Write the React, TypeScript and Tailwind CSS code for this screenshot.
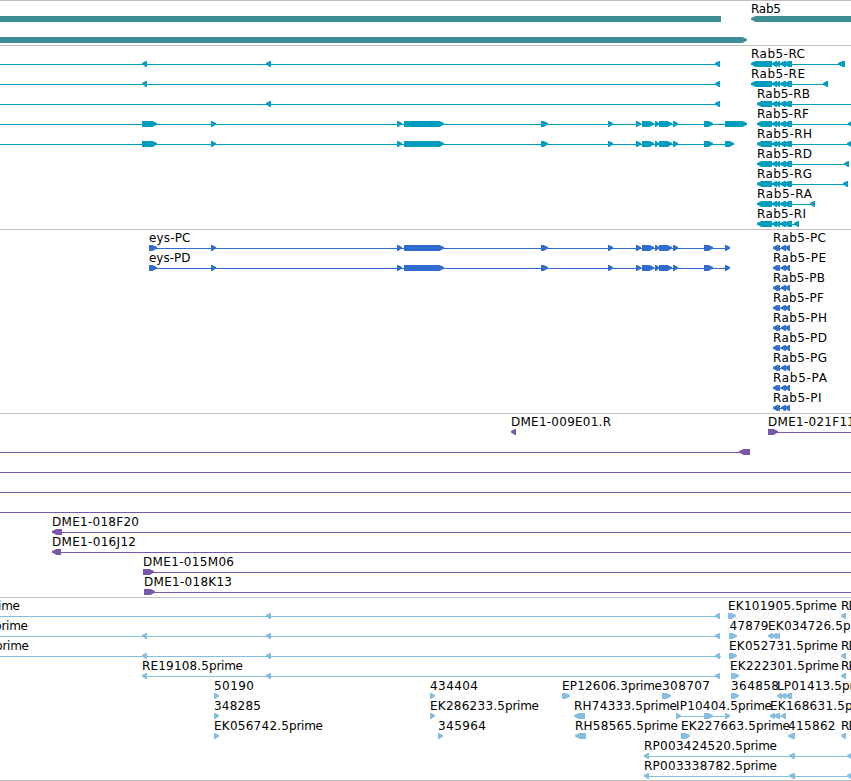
type Direction = "left" | "right"

// start, end, direction of the arrow head
type Exon = [number, number, Direction]

// text, start, drawn width
type Label = [string, number, number]

interface Row {
  lines?: [number, number][]
  exons?: Exon[]
  labels?: Label[]
}

interface TrackProps {
  rows: Row[]
  color: string
  rowClassName?: string
  className?: string
}

const WIDTH = 851
const HEAD = 4.5
const SUFFIX = "prime"
const SUFFIX_WIDTH = 34

const l = (start: number, end: number): Exon => [start, end, "left"]
const r = (start: number, end: number): Exon => [start, end, "right"]

const geneRows: Row[] = [
  {
    exons: [r(-20, 721), l(751, 870)],
    labels: [["Rab5", 751, 30]],
  },
  { exons: [r(-20, 747)] },
]

const eysExons: Exon[] = [
  r(211, 216),
  r(397, 402),
  r(404, 444),
  r(541, 548),
  r(608, 613),
  r(636, 641),
  r(642, 654),
  r(655, 659),
  r(659, 672),
  r(673, 678),
  r(704, 713),
]

const rab5Exons: Exon[] = [l(772, 777), l(776, 780), l(780, 786), l(784, 792)]

const rab5Transcript = (name: string, start: number, width: number, last: Exon): Row => ({
  lines: [[start, last[1]]],
  exons: [l(start, 772), ...rab5Exons, last],
  labels: [[name, start, width]],
})

const withRow = (a: Row, b: Row): Row => ({
  lines: [...(a.lines ?? []), ...(b.lines ?? [])],
  exons: [...(a.exons ?? []), ...(b.exons ?? [])],
  labels: [...(a.labels ?? []), ...(b.labels ?? [])],
})

const transcriptRows: Row[] = [
  withRow(
    { lines: [[0, 720]], exons: [l(142, 147), l(266, 271), l(715, 720)] },
    rab5Transcript("Rab5-RC", 751, 54, l(838, 845)),
  ),
  withRow(
    { lines: [[0, 720]], exons: [l(142, 147), l(715, 720)] },
    rab5Transcript("Rab5-RE", 751, 54, l(823, 828)),
  ),
  withRow(
    { lines: [[0, 720]], exons: [l(266, 271), l(715, 720)] },
    rab5Transcript("Rab5-RB", 757, 53, l(856, 862)),
  ),
  withRow(
    { lines: [[0, 747]], exons: [r(142, 157), ...eysExons, r(725, 747)] },
    rab5Transcript("Rab5-RF", 757, 52, l(848, 853)),
  ),
  withRow(
    { lines: [[0, 734]], exons: [r(142, 157), ...eysExons, r(725, 734)] },
    rab5Transcript("Rab5-RH", 757, 55, l(847, 852)),
  ),
  rab5Transcript("Rab5-RD", 757, 55, l(844, 849)),
  rab5Transcript("Rab5-RG", 757, 55, l(843, 848)),
  rab5Transcript("Rab5-RA", 757, 55, l(810, 815)),
  rab5Transcript("Rab5-RI", 757, 49, l(794, 799)),
]

const eysProtein = (name: string): Row => ({
  lines: [[149, 730]],
  exons: [r(149, 157), ...eysExons, r(725, 730)],
  labels: [[name, 149, 41.5]],
})

const rab5Protein = (name: string, width: number): Row => ({
  lines: [[773, 789]],
  exons: [l(773, 778), l(776, 780), l(781, 786), l(785, 790)],
  labels: [[name, 773, width]],
})

const proteinRows: Row[] = [
  withRow(eysProtein("eys-PC"), rab5Protein("Rab5-PC", 53)),
  withRow(eysProtein("eys-PD"), rab5Protein("Rab5-PE", 53)),
  rab5Protein("Rab5-PB", 52),
  rab5Protein("Rab5-PF", 51),
  rab5Protein("Rab5-PH", 54),
  rab5Protein("Rab5-PD", 54),
  rab5Protein("Rab5-PG", 54),
  rab5Protein("Rab5-PA", 54),
  rab5Protein("Rab5-PI", 48.5),
]

const bacRows: Row[] = [
  {
    lines: [[768, WIDTH]],
    exons: [l(511, 516), r(768, 778)],
    labels: [
      ["DME1-009E01.R", 511, 100],
      ["DME1-021F11", 768, 87],
    ],
  },
  { lines: [[0, 750]], exons: [l(739, 750)] },
  { lines: [[0, WIDTH]] },
  { lines: [[0, WIDTH]] },
  { lines: [[0, WIDTH]] },
  { lines: [[52, WIDTH]], exons: [l(52, 62)], labels: [["DME1-018F20", 52, 87]] },
  { lines: [[52, WIDTH]], exons: [l(52, 61)], labels: [["DME1-016J12", 52, 84]] },
  { lines: [[143, WIDTH]], exons: [r(143, 154)], labels: [["DME1-015M06", 143, 91]] },
  { lines: [[144, WIDTH]], exons: [r(144, 155)], labels: [["DME1-018K13", 144, 88]] },
]

const cdnaRows: Row[] = [
  {
    lines: [[0, 720]],
    exons: [l(266, 271), l(715, 720), r(728, 736), l(841, 846)],
    labels: [
      ["prime", -14, 34],
      ["EK101905.5prime", 728, 109],
      ["RE", 841, 15],
    ],
  },
  {
    lines: [[0, 720]],
    exons: [l(142, 147), l(266, 271), l(715, 720), r(729, 737), l(768, 773), l(772, 777), l(775, 780)],
    labels: [
      ["prime", -6, 34],
      ["47879", 729.5, 39],
      ["EK034726.5prime", 768, 109],
    ],
  },
  {
    lines: [[0, 721]],
    exons: [l(142, 147), l(266, 271), l(715, 720), r(729, 737), l(841, 846)],
    labels: [
      ["prime", -5, 34],
      ["EK052731.5prime", 729, 109],
      ["RE", 841, 15],
    ],
  },
  {
    lines: [[142, 720]],
    exons: [l(142, 147), l(266, 271), l(715, 720), r(731, 739), l(841, 846)],
    labels: [
      ["RE19108.5prime", 142, 101],
      ["EK222301.5prime", 730, 109],
      ["RE", 841, 15],
    ],
  },
  {
    exons: [r(214, 219), r(430, 435), r(562, 570), r(662, 671), r(731, 739), l(777, 782), l(781, 786), l(785, 792)],
    labels: [
      ["50190", 214, 40],
      ["434404", 430, 48],
      ["EP12606.3prime", 562, 100],
      ["308707", 662, 48],
      ["364858", 731, 48],
      ["LP01413.5prime", 777, 99],
    ],
  },
  {
    lines: [
      [676, 730],
      [770, 785],
    ],
    exons: [
      r(214, 219),
      r(430, 435),
      l(574, 585),
      r(676, 681),
      r(704, 713),
      r(725, 730),
      l(770, 775),
      l(774, 780),
      l(781, 786),
    ],
    labels: [
      ["348285", 214, 47],
      ["EK286233.5prime", 430, 109],
      ["RH74333.5prime", 574, 103],
      ["IP10404.5prime", 676, 96],
      ["EK168631.5prime", 770, 109],
    ],
  },
  {
    exons: [r(214, 219), r(438, 443), l(575, 586), r(681, 690), l(788, 795), l(841, 846)],
    labels: [
      ["EK056742.5prime", 214, 109],
      ["345964", 438, 48],
      ["RH58565.5prime", 575, 103],
      ["EK227663.5prime", 681, 109],
      ["415862", 788, 47.5],
      ["RE", 841, 15],
    ],
  },
  {
    lines: [[644, WIDTH]],
    exons: [l(644, 649), l(789, 795), l(847, 852)],
    labels: [["RP003424520.5prime", 644, 133]],
  },
  {
    lines: [[644, WIDTH]],
    exons: [l(644, 649), l(789, 795), l(847, 852)],
    labels: [["RP003338782.5prime", 644, 133]],
  },
]

function exonPoints([start, end, direction]: Exon) {
  // the upper gene is broken off at 721, so it has a flat end there
  if (end === 721) return `${start},15 ${end},15 ${end},21 ${start},21`
  const head = Math.min(HEAD, end - start - 1)
  if (direction === "right") {
    return `${start},15 ${end - head},15 ${end},17 ${end},18.4 ${end - head},21 ${start},21`
  }
  return `${end},15 ${start + head},15 ${start},17 ${start},18.4 ${start + head},21 ${end},21`
}

function RowLabel({ label: [text, x, width] }: { label: Label }) {
  if (text.endsWith(SUFFIX) && text !== SUFFIX) {
    const suffixX = x + width - SUFFIX_WIDTH
    return (
      <>
        <text x={x} y={12} textLength={suffixX - x} className="fill-black">
          {text.slice(0, -SUFFIX.length)}
        </text>
        <text x={suffixX} y={12} textLength={SUFFIX_WIDTH} className="fill-black">
          {SUFFIX}
        </text>
      </>
    )
  }

  return (
    <text x={x} y={12} textLength={width} className="fill-black">
      {text}
    </text>
  )
}

function TrackRow({ row, className }: { row: Row; className: string }) {
  return (
    <svg width={WIDTH} className={`block shrink-0 overflow-visible ${className}`}>
      {row.lines?.map(([start, end], i) => (
        <rect key={i} x={start} y={18} width={end - start} height={1} fill="currentColor" />
      ))}
      {row.exons?.map((exon, i) => (
        <polygon key={i} points={exonPoints(exon)} fill="currentColor" />
      ))}
      {row.labels?.map((label, i) => (
        <RowLabel key={i} label={label} />
      ))}
    </svg>
  )
}

function Track({ rows, color, rowClassName = "h-5", className = "pb-[3px]" }: TrackProps) {
  return (
    <section className={`flex flex-col border-t border-[#c0c0c0] ${color} ${className}`}>
      {rows.map((row, i) => (
        <TrackRow key={i} row={row} className={rowClassName} />
      ))}
    </section>
  )
}

export default function App() {
  return (
    <main className="h-[781px] w-[851px] overflow-hidden bg-white font-['DejaVu_Sans',sans-serif] text-[12px]">
      <Track rows={geneRows} color="text-[#3f8e94]" rowClassName="h-[21px]" className="pb-[2px]" />
      <Track rows={transcriptRows} color="text-[#009dbf]" />
      <Track rows={proteinRows} color="text-[#316dce]" />
      <Track rows={bacRows} color="text-[#7859a9]" />
      <Track rows={cdnaRows} color="text-[#87bddf]" className="border-b pb-[2px]" />
    </main>
  )
}
